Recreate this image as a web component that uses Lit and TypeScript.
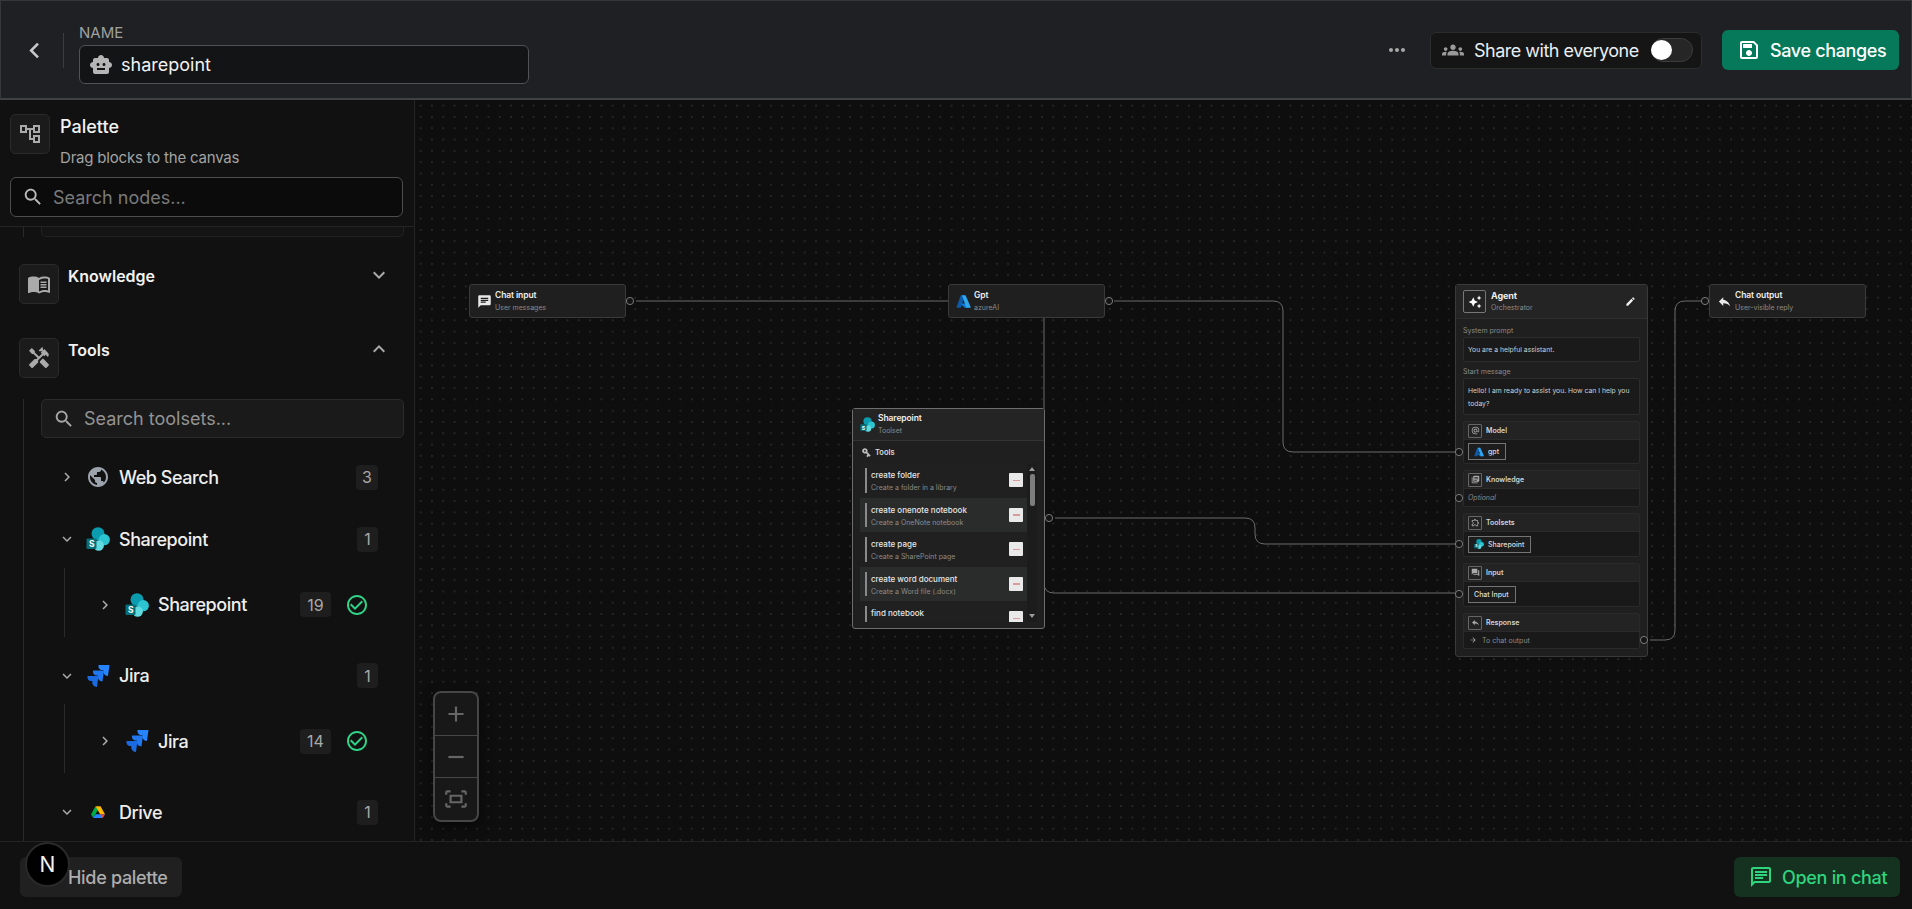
import { LitElement, css, html, svg } from "lit";
import { customElement } from "lit/decorators.js";

const P = {
  back: "M15.41 7.41 14 6l-6 6 6 6 1.41-1.41L10.83 12z",
  down: "M16.59 8.59 12 13.17 7.41 8.59 6 10l6 6 6-6z",
  up: "M12 8l-6 6 1.41 1.41L12 10.83l4.59 4.58L18 14z",
  right: "M10 6 8.59 7.41 13.17 12l-4.58 4.59L10 18l6-6z",
  search:
    "M15.5 14h-.79l-.28-.27C15.41 12.59 16 11.11 16 9.5 16 5.91 13.09 3 9.5 3S3 5.91 3 9.5 5.91 16 9.5 16c1.61 0 3.09-.59 4.23-1.57l.27.28v.79l5 4.99L20.49 19l-4.99-5zm-6 0C7.01 14 5 11.99 5 9.5S7.01 5 9.5 5 14 7.01 14 9.5 11.99 14 9.5 14z",
  robot:
    "M20 9V7c0-1.1-.9-2-2-2h-3c0-1.66-1.34-3-3-3S9 3.34 9 5H6c-1.1 0-2 .9-2 2v2c-1.66 0-3 1.34-3 3s1.34 3 3 3v4c0 1.1.9 2 2 2h12c1.1 0 2-.9 2-2v-4c1.66 0 3-1.34 3-3s-1.34-3-3-3zM7.5 11.5c0-.83.67-1.5 1.5-1.5s1.5.67 1.5 1.5S9.83 13 9 13s-1.5-.67-1.5-1.5zM16 17H8v-2h8v2zm-1-4c-.83 0-1.5-.67-1.5-1.5S14.17 10 15 10s1.5.67 1.5 1.5S15.83 13 15 13z",
  more: "M6 10c-1.1 0-2 .9-2 2s.9 2 2 2 2-.9 2-2-.9-2-2-2zm12 0c-1.1 0-2 .9-2 2s.9 2 2 2 2-.9 2-2-.9-2-2-2zm-6 0c-1.1 0-2 .9-2 2s.9 2 2 2 2-.9 2-2-.9-2-2-2z",
  groups:
    "M12 12.75c1.63 0 3.07.39 4.24.9 1.08.48 1.76 1.56 1.76 2.73V18H6v-1.61c0-1.18.68-2.26 1.76-2.73 1.17-.52 2.61-.91 4.24-.91zM4 13c1.1 0 2-.9 2-2s-.9-2-2-2-2 .9-2 2 .9 2 2 2zm1.13 1.1c-.37-.06-.74-.1-1.13-.1-.99 0-1.93.21-2.78.58C.48 14.9 0 15.62 0 16.43V18h4.5v-1.61c0-.83.23-1.61.63-2.29zM20 13c1.1 0 2-.9 2-2s-.9-2-2-2-2 .9-2 2 .9 2 2 2zm4 3.43c0-.81-.48-1.53-1.22-1.85-.85-.37-1.79-.58-2.78-.58-.39 0-.76.04-1.13.1.4.68.63 1.46.63 2.29V18H24v-1.57zM12 6c1.66 0 3 1.34 3 3s-1.34 3-3 3-3-1.34-3-3 1.34-3 3-3z",
  save: "M17 3H5c-1.11 0-2 .9-2 2v14c0 1.1.89 2 2 2h14c1.1 0 2-.9 2-2V7l-4-4zm2 16H5V5h11.17L19 7.83V19zm-7-7c-1.66 0-3 1.34-3 3s1.34 3 3 3 3-1.34 3-3-1.34-3-3-3zM6 6h9v4H6z",
  tree: "M22 11V3h-7v3H9V3H2v8h7V8h2v10h4v3h7v-8h-7v3h-2V8h2v3h7zM7 9H4V5h3v4zm10 6h3v4h-3v-4zm0-10h3v4h-3V5z",
  book: "M21 5c-1.11-.35-2.33-.5-3.5-.5-1.95 0-4.05.4-5.5 1.5-1.45-1.1-3.55-1.5-5.5-1.5S2.45 4.9 1 6v14.65c0 .25.25.5.5.5.1 0 .15-.05.25-.05C3.1 20.45 5.05 20 6.5 20c1.95 0 4.05.4 5.5 1.5 1.35-.85 3.8-1.5 5.5-1.5 1.65 0 3.35.3 4.75 1.05.1.05.15.05.25.05.25 0 .5-.25.5-.5V6c-.6-.45-1.25-.75-2-1zm0 13.5c-1.1-.35-2.3-.5-3.5-.5-1.7 0-4.15.65-5.5 1.5V8c1.35-.85 3.8-1.5 5.5-1.5 1.2 0 2.4.15 3.5.5v11.5zM13.5 9.5h6V11h-6zM13.5 12h6v1.5h-6zM13.5 14.5h6V16h-6z",
  tools:
    "M21.67 18.17l-5.3-5.3h-.99l-2.54 2.54v.99l5.3 5.3c.39.39 1.02.39 1.41 0l2.12-2.12c.39-.38.39-1.02 0-1.41zM17.34 10.19l1.41-1.41 2.12 2.12c1.17-1.17 1.17-3.07 0-4.24l-3.54-3.54-1.41 1.41V1.71l-.7-.71-3.54 3.54.71.71h2.83l-1.41 1.41 1.06 1.06-2.89 2.89-4.13-4.13V5.06L4.83 2.04 2 4.87 5.03 7.9h1.41l4.13 4.13-.85.85H7.6l-5.3 5.3c-.39.39-.39 1.02 0 1.41l2.12 2.12c.39.39 1.02.39 1.41 0l5.3-5.3v-2.12l5.15-5.15 1.06 1.05z",
  globe:
    "M12 2C6.48 2 2 6.48 2 12s4.48 10 10 10 10-4.48 10-10S17.52 2 12 2zm-1 17.93c-3.95-.49-7-3.85-7-7.93 0-.62.08-1.21.21-1.79L9 15v1c0 1.1.9 2 2 2v1.93zm6.9-2.54c-.26-.81-1-1.39-1.9-1.39h-1v-3c0-.55-.45-1-1-1H8v-2h2c.55 0 1-.45 1-1V7h2c1.1 0 2-.9 2-2v-.41c2.93 1.19 5 4.06 5 7.41 0 2.08-.8 3.97-2.1 5.39z",
  check:
    "M16.59 7.58 10 14.17l-3.59-3.58L5 12l5 5 8-8zM12 2C6.48 2 2 6.48 2 12s4.48 10 10 10 10-4.48 10-10S17.52 2 12 2zm0 18c-4.42 0-8-3.58-8-8s3.58-8 8-8 8 3.58 8 8-3.58 8-8 8z",
  plus: "M19 13h-6v6h-2v-6H5v-2h6V5h2v6h6v2z",
  minus: "M19 13H5v-2h14v2z",
  fit: "M17 4h3c1.1 0 2 .9 2 2v2h-2V6h-3V4zM4 8V6h3V4H4c-1.1 0-2 .9-2 2v2h2zm16 8v2h-3v2h3c1.1 0 2-.9 2-2v-2h-2zM7 18H4v-2H2v2c0 1.1.9 2 2 2h3v-2zM18 8H6v8h12V8zm-2 6H8v-4h8v4z",
  chat: "M20 2H4c-1.1 0-2 .9-2 2v18l4-4h14c1.1 0 2-.9 2-2V4c0-1.1-.9-2-2-2zm0 14H5.17L4 17.17V4h16v12zM6 12h8v2H6zm0-3h12v2H6zm0-3h12v2H6z",
  chatFill:
    "M20 2H4c-1.1 0-1.99.9-1.99 2L2 22l4-4h14c1.1 0 2-.9 2-2V4c0-1.1-.9-2-2-2zM6 9h12v2H6V9zm8 5H6v-2h8v2zm4-6H6V6h12v2z",
  reply: "M10 9V5l-7 7 7 7v-4.1c5 0 8.5 1.6 11 5.1-1-5-4-10-11-11z",
  edit: "M3 17.25V21h3.75L17.81 9.94l-3.75-3.75L3 17.25zM20.71 7.04c.39-.39.39-1.02 0-1.41l-2.34-2.34c-.39-.39-1.02-.39-1.41 0l-1.83 1.83 3.75 3.75 1.83-1.83z",
  spark:
    "M19 9l1.25-2.75L23 5l-2.75-1.25L19 1l-1.25 2.75L15 5l2.75 1.25zm-7.5.5L9 4 6.5 9.5 1 12l5.5 2.5L9 20l2.5-5.5L17 12zM19 15l-1.25 2.75L15 19l2.75 1.25L19 23l1.25-2.75L23 19l-2.75-1.25z",
  key: "M12.65 10C11.83 7.67 9.61 6 7 6c-3.31 0-6 2.69-6 6s2.69 6 6 6c2.61 0 4.83-1.67 5.65-4H17v4h4v-4h2v-4H12.65zM7 14c-1.1 0-2-.9-2-2s.9-2 2-2 2 .9 2 2-.9 2-2 2z",
  arrow: "M12 4l-1.41 1.41L16.17 11H4v2h12.17l-5.58 5.59L12 20l8-8z",
  library:
    "M4 6H2v14c0 1.1.9 2 2 2h14v-2H4V6zm16-4H8c-1.1 0-2 .9-2 2v12c0 1.1.9 2 2 2h12c1.1 0 2-.9 2-2V4c0-1.1-.9-2-2-2zm-1 9H9V9h10v2zm-4 4H9v-2h6v2zm4-8H9V5h10v2z",
  forum:
    "M21 6h-2v9H6v2c0 .55.45 1 1 1h11l4 4V7c0-.55-.45-1-1-1zm-4 6V3c0-.55-.45-1-1-1H3c-.55 0-1 .45-1 1v14l4-4h10c.55 0 1-.45 1-1z",
  puzzle:
    "M10.5 4.5c.28 0 .5.22.5.5v2h6v6h2c.28 0 .5.22.5.5s-.22.5-.5.5h-2v6h-2.12c-.68-1.75-2.39-3-4.38-3s-3.7 1.25-4.38 3H4v-2.12c1.75-.68 3-2.39 3-4.38 0-1.99-1.24-3.7-2.99-4.38L4 7h6V5c0-.28.22-.5.5-.5m0-2C9.12 2.5 8 3.62 8 5H4c-1.1 0-1.99.9-1.99 2v3.8h.29c1.49 0 2.7 1.21 2.7 2.7s-1.21 2.7-2.7 2.7H2V20c0 1.1.9 2 2 2h3.8v-.3c0-1.49 1.21-2.7 2.7-2.7s2.7 1.21 2.7 2.7v.3H17c1.1 0 2-.9 2-2v-4c1.38 0 2.5-1.12 2.5-2.5S20.38 11 19 11V7c0-1.1-.9-2-2-2h-4c0-1.38-1.12-2.5-2.5-2.5z",
  memory:
    "M12 2a10 10 0 1 0 0 20h5v-2h-5a8 8 0 1 1 8-8v1.4c0 .8-.7 1.6-1.5 1.6s-1.5-.8-1.5-1.6V12a5 5 0 1 0-1.5 3.5 3.7 3.7 0 0 0 6.5-2.1V12A10 10 0 0 0 12 2zm0 13a3 3 0 1 1 0-6 3 3 0 0 1 0 6z",
};

const icon = (d: string, cls: string) =>
  html`<svg class=${cls} viewBox="0 0 24 24"><path d=${d}></path></svg>`;

const sharepointLogo = (cls: string) => html`<svg class=${cls} viewBox="0 0 24 24">
  <circle cx="12" cy="6.7" r="6.5" fill="#0c9cb0"></circle>
  <circle cx="18.3" cy="12.7" r="5.6" fill="#2cc4d0"></circle>
  <circle cx="12.7" cy="18.5" r="5.2" fill="#62dbe0"></circle>
  <rect x="0.5" y="11.5" width="10" height="10.5" rx="1" fill="#05707a"></rect>
  <text x="5.5" y="20" font-size="8.5" font-weight="700" fill="#fff" text-anchor="middle">S</text>
</svg>`;

const jiraPiece = "M0 0h11v11c-3 0-5.4-2.4-5.4-5.4V5H4.6C2 5 0 3 0 0z";
const jiraLogo = (cls: string) => html`<svg class=${cls} viewBox="0 0 24 24">
  <path d=${jiraPiece} transform="translate(12.5 1) skewX(-8)" fill="#2684ff"></path>
  <path d=${jiraPiece} transform="translate(7 6.5) skewX(-8)" fill="#1f78f0"></path>
  <path d=${jiraPiece} transform="translate(1.5 12) skewX(-8)" fill="#1a6be0"></path>
</svg>`;

const azureLogo = (cls: string) => html`<svg class=${cls} viewBox="0 0 24 24">
  <path d="M8.3 2h6.4L8 21.3c-.1.4-.5.7-1 .7H2c-.7 0-1.2-.7-1-1.4L7.3 2.7c.1-.4.5-.7 1-.7z" fill="#0c5aa8"></path>
  <path d="M17.8 15.3H7.6c-.3 0-.4.3-.2.5l6.5 6c.2.1.4.2.7.2h5.8z" fill="#0a78d6"></path>
  <path d="M15.6 2.7c-.1-.4-.5-.7-1-.7H8.8c.5 0 .9.3 1 .7l6.3 18.6c.2.4-.1.7-.6.7h7c.7 0 1.2-.7 1-1.4z" fill="#2ea5ec"></path>
</svg>`;

const driveLogo = (cls: string) => html`<svg class=${cls} viewBox="-7 -7 38 38">
  <path d="M8 3 1 15.5l3.5 6L12 8.5z" fill="#00ac47"></path>
  <path d="M8 3h8l7 12.5h-7.6z" fill="#ffba00"></path>
  <path d="M4.5 21.5l3.6-6H23l-3.5 6z" fill="#2684fc"></path>
  <path d="M23 15.5h-7.6l4 6z" fill="#ea4335"></path>
</svg>`;

const baseCss = css`
  * {
    box-sizing: border-box;
  }
  svg {
    display: block;
    flex: none;
    fill: currentColor;
  }
  input {
    flex: 1;
    min-width: 0;
    border: none;
    outline: none;
    background: transparent;
    font: inherit;
    color: inherit;
    padding: 0;
  }
`;

type TreeItem = { name: string; logo: (c: string) => unknown; count: string; tools?: string };

const TOOLSETS: TreeItem[] = [
  { name: "Sharepoint", logo: sharepointLogo, count: "1", tools: "19" },
  { name: "Jira", logo: jiraLogo, count: "1", tools: "14" },
  { name: "Drive", logo: driveLogo, count: "1" },
];

@customElement("palette-panel")
export class PalettePanel extends LitElement {
  static styles = [
    baseCss,
    css`
      :host {
        display: flex;
        flex-direction: column;
        width: 415px;
        flex: none;
        border-right: 1px solid #242424;
        overflow: hidden;
        color: #eee;
      }
      .head {
        flex: none;
        height: 127px;
        padding: 14px 10px 0;
        border-bottom: 1px solid #242424;
      }
      .head-row {
        display: flex;
        gap: 10px;
      }
      .box {
        width: 40px;
        height: 40px;
        flex: none;
        display: flex;
        align-items: center;
        justify-content: center;
        background: #1b1b1b;
        border: 1px solid #2a2a2a;
        border-radius: 5px;
        color: #aaa;
      }
      .box svg {
        width: 24px;
        height: 24px;
      }
      .title {
        font-size: 18px;
        line-height: 22px;
        font-weight: 500;
        color: #f2f2f2;
        margin-top: 1.5px;
      }
      .sub {
        margin-top: 10px;
        font-size: 15px;
        line-height: 20px;
        color: #a3a3a3;
        letter-spacing: -0.2px;
      }
      .search {
        display: flex;
        align-items: center;
        gap: 9px;
        height: 40px;
        margin-top: 9.5px;
        margin-right: 1px;
        padding-left: 11px;
        background: #0b0b0b;
        border: 1px solid #4d4d4d;
        border-radius: 6px;
        font-size: 18px;
        letter-spacing: -0.65px;
      }
      .search svg {
        width: 22px;
        height: 22px;
        color: #bbb;
      }
      input::placeholder {
        color: #7a7a7a;
      }
      .scroll {
        flex: 1;
        min-height: 0;
        overflow: hidden;
        display: flex;
        flex-direction: column;
      }
      .stub {
        flex: none;
        height: 10px;
        margin-left: 23px;
        padding-left: 17px;
        border-left: 1px solid #2a2a2a;
      }
      .stub div {
        width: 363px;
        height: 10px;
        background: #141414;
        border: 1px solid #222;
        border-top: none;
        border-radius: 0 0 5px 5px;
      }
      .section {
        flex: none;
        display: flex;
        align-items: flex-start;
        margin: 27px 23px 0 19px;
        gap: 9px;
      }
      .section + .section {
        margin-top: 34px;
      }
      .section .title {
        flex: 1;
        margin-top: 1px;
        font-size: 16px;
        font-weight: 600;
      }
      .section > svg {
        width: 24px;
        height: 24px;
        color: #aaa;
        margin-top: -1px;
      }
      .tree {
        flex: 1;
        margin: 21px 10px 0 23px;
        padding-left: 17px;
        border-left: 1px solid #2a2a2a;
      }
      .find {
        display: flex;
        align-items: center;
        gap: 9px;
        height: 39px;
        padding-left: 11px;
        background: #1a1a1a;
        border: 1px solid #2b2b2b;
        border-radius: 5px;
        font-size: 18px;
        letter-spacing: -0.65px;
      }
      .find svg {
        width: 22px;
        height: 22px;
        color: #a8a8a8;
      }
      .find input::placeholder {
        color: #939393;
      }
      .rows {
        margin-top: 19px;
      }
      .row {
        display: flex;
        align-items: center;
        height: 40px;
        padding: 0 26px 0 17px;
        font-size: 18px;
        font-weight: 500;
        letter-spacing: -0.45px;
      }
      .chev {
        width: 18px;
        height: 18px;
        color: #aaa;
      }
      .logo {
        width: 24px;
        height: 24px;
        margin: 0 9px 0 10px;
      }
      .globe {
        color: #9ca3ad;
        fill: #9ca3ad;
      }
      .name {
        flex: 1;
      }
      .badge {
        min-width: 21px;
        height: 25px;
        padding: 0 6px;
        display: flex;
        align-items: center;
        justify-content: center;
        background: #1e1e1e;
        border-radius: 4px;
        color: #a8a8a8;
        font-size: 16px;
        font-weight: 400;
        letter-spacing: 0;
      }
      .group {
        margin-bottom: 19px;
      }
      .group.leaf {
        margin-bottom: 22px;
      }
      .child {
        margin: 8.5px 0 0 23px;
        height: 69px;
        padding-top: 17px;
        border-left: 1px solid #2a2a2a;
      }
      .child .row {
        padding: 0 35px 0 31px;
      }
      .child .logo {
        margin: 0 9px 0 11px;
      }
      .child .badge {
        width: 31px;
      }
      .ok {
        width: 24px;
        height: 24px;
        margin-left: 14px;
        color: #2fd488;
      }
    `,
  ];

  render() {
    return html`
      <div class="head">
        <div class="head-row">
          <div class="box">${icon(P.tree, "")}</div>
          <div>
            <div class="title">Palette</div>
            <div class="sub">Drag blocks to the canvas</div>
          </div>
        </div>
        <div class="search">
          ${icon(P.search, "")}
          <input placeholder="Search nodes..." />
        </div>
      </div>
      <div class="scroll">
        <div class="stub"><div></div></div>
        <div class="section">
          <div class="box">${icon(P.book, "")}</div>
          <div class="title">Knowledge</div>
          ${icon(P.down, "")}
        </div>
        <div class="section">
          <div class="box">${icon(P.tools, "")}</div>
          <div class="title">Tools</div>
          ${icon(P.up, "")}
        </div>
        <div class="tree">
          <div class="find">
            ${icon(P.search, "")}
            <input placeholder="Search toolsets..." />
          </div>
          <div class="rows">
            <div class="group leaf">
              <div class="row">
                ${icon(P.right, "chev")} ${icon(P.globe, "logo globe")}
                <span class="name">Web Search</span>
                <span class="badge">3</span>
              </div>
            </div>
            ${TOOLSETS.map(
              (t) => html`
                <div class="group">
                  <div class="row">
                    ${icon(P.down, "chev")} ${t.logo("logo")}
                    <span class="name">${t.name}</span>
                    <span class="badge">${t.count}</span>
                  </div>
                  ${t.tools
                    ? html`<div class="child">
                        <div class="row">
                          ${icon(P.right, "chev")} ${t.logo("logo")}
                          <span class="name">${t.name}</span>
                          <span class="badge">${t.tools}</span>
                          ${icon(P.check, "ok")}
                        </div>
                      </div>`
                    : ""}
                </div>
              `
            )}
          </div>
        </div>
      </div>
    `;
  }
}

type FlatNode = { x: number; title: string; sub: string; logo: unknown };

const FLAT_NODES: FlatNode[] = [
  { x: 54, title: "Chat input", sub: "User messages", logo: icon(P.chatFill, "n-ic") },
  { x: 533, title: "Gpt", sub: "azureAI", logo: azureLogo("n-ic") },
  { x: 1294, title: "Chat output", sub: "User-visible reply", logo: icon(P.reply, "n-ic") },
];

const SP_TOOLS = [
  ["create folder", "Create a folder in a library"],
  ["create onenote notebook", "Create a OneNote notebook"],
  ["create page", "Create a SharePoint page"],
  ["create word document", "Create a Word file (.docx)"],
  ["find notebook", ""],
];

const EDGES = [
  "M636 301H948",
  "M1114 301H1273Q1283 301 1283 311V442Q1283 452 1293 452H1455",
  "M1044 318V583Q1044 593 1054 593H1455",
  "M1055 518H1245Q1255 518 1255 528V534Q1255 544 1265 544H1455",
  "M1650 640H1665Q1675 640 1675 630V311Q1675 301 1685 301H1701",
];

const HANDLES: [number, number][] = [
  [630, 301],
  [1109, 301],
  [1049, 518],
  [1459, 452],
  [1459, 498],
  [1459, 544],
  [1459, 594],
  [1644, 640],
  [1705, 301],
];

@customElement("flow-canvas")
export class FlowCanvas extends LitElement {
  static styles = [
    baseCss,
    css`
      :host {
        display: block;
        flex: 1;
        position: relative;
        overflow: hidden;
        background-color: #0e0e0e;
        background-image: radial-gradient(circle, #262626 0.8px, transparent 1px);
        background-size: 11.3px 11.3px;
        color: #eee;
      }
      .wires {
        position: absolute;
        inset: 0;
        width: 100%;
        height: 100%;
        fill: none;
      }
      .wires path {
        stroke: #6a6a6a;
        stroke-width: 1;
      }
      .wires circle {
        fill: #141414;
        stroke: #7a7a7a;
        stroke-width: 1;
      }
      .node {
        position: absolute;
        background: #1f1f1f;
        border: 1px solid #3a3a3a;
        border-radius: 3px;
      }
      .flat {
        top: 184px;
        width: 157px;
        height: 34px;
        display: flex;
        align-items: center;
        gap: 3px;
        padding-left: 7px;
      }
      .n-ic {
        width: 15px;
        height: 15px;
        color: #e8e8e8;
      }
      .t {
        font-size: 8.5px;
        line-height: 11px;
        font-weight: 600;
        color: #eee;
        letter-spacing: -0.1px;
      }
      .s {
        margin-top: 2px;
        font-size: 7px;
        line-height: 10px;
        color: #8a8a8a;
      }
      .toolset {
        left: 437px;
        top: 308px;
        width: 193px;
        height: 221px;
        border-color: #6e6e6e;
        display: flex;
        flex-direction: column;
      }
      .n-head {
        flex: none;
        height: 32px;
        display: flex;
        align-items: center;
        gap: 3px;
        padding-left: 7px;
        background: #242424;
        border-bottom: 1px solid #333;
      }
      .tools-label {
        flex: none;
        height: 22px;
        display: flex;
        align-items: center;
        gap: 3px;
        padding-left: 8px;
        font-size: 7.5px;
        font-weight: 600;
        color: #ddd;
      }
      .tools-label svg {
        width: 11px;
        height: 11px;
        color: #bbb;
        transform: rotate(45deg);
      }
      .tool-box {
        flex: none;
        margin: 0 7px;
        height: 159px;
        display: flex;
        background: #202020;
        border-radius: 2px;
        overflow: hidden;
      }
      .tool-list {
        flex: 1;
        min-width: 0;
        overflow: hidden;
      }
      .tool {
        height: 34.5px;
        display: flex;
        align-items: center;
        padding: 5px 4px 5px 5px;
        gap: 4px;
      }
      .tool:nth-child(even) {
        background: #2a2c2b;
      }
      .tool .bar {
        width: 2px;
        align-self: stretch;
        flex: none;
        background: #8a8a8a;
      }
      .tool .txt {
        flex: 1;
        min-width: 0;
        margin-top: 3px;
      }
      .tool .nm {
        font-size: 8px;
        line-height: 11px;
        font-weight: 500;
        color: #e6e6e6;
      }
      .tool .ds {
        height: 10px;
        margin-top: 2px;
        font-size: 7px;
        line-height: 10px;
        color: #8a8a8a;
      }
      .rm {
        width: 14px;
        height: 14px;
        flex: none;
        display: flex;
        align-items: center;
        justify-content: center;
        background: #e9e9e9;
        border-radius: 1px;
      }
      .rm i {
        display: block;
        width: 7px;
        height: 1.5px;
        background: #d89a9a;
      }
      .track {
        width: 10px;
        flex: none;
        display: flex;
        flex-direction: column;
        align-items: center;
        background: #1c1c1c;
        padding: 4px 0;
      }
      .arr-up,
      .arr-down {
        width: 0;
        height: 0;
        border-left: 3px solid transparent;
        border-right: 3px solid transparent;
      }
      .arr-up {
        border-bottom: 4px solid #999;
      }
      .arr-down {
        margin-top: auto;
        border-top: 4px solid #999;
      }
      .thumb {
        width: 5px;
        height: 32px;
        margin-top: 3px;
        background: #7d7d7d;
        border-radius: 2px;
      }
      .agent {
        left: 1040px;
        top: 184px;
        width: 193px;
        height: 373px;
      }
      .a-head {
        height: 34px;
        display: flex;
        align-items: center;
        gap: 5px;
        padding: 0 11px 0 7px;
        background: #242424;
        border-bottom: 1px solid #2e2e2e;
      }
      .a-ic {
        width: 23px;
        height: 23px;
        display: flex;
        align-items: center;
        justify-content: center;
        border: 1px solid #777;
        border-radius: 2px;
        background: #222;
      }
      .a-ic svg {
        width: 14px;
        height: 14px;
        color: #fff;
      }
      .a-head .t {
        font-size: 9px;
        font-weight: 700;
      }
      .a-title {
        flex: 1;
      }
      .pencil {
        width: 11px;
        height: 11px;
        color: #eee;
      }
      .a-body {
        padding: 5px 7px 0;
      }
      .lbl {
        height: 13px;
        font-size: 7px;
        line-height: 13px;
        color: #8a8a8a;
      }
      .prompt {
        height: 25px;
        padding: 0 4px;
        margin-bottom: 3px;
        display: flex;
        align-items: center;
        background: #1a1a1a;
        border: 1px solid #2c2c2c;
        border-radius: 2px;
        font-size: 6.8px;
        line-height: 13px;
        color: #cfcfcf;
      }
      .prompt.tall {
        height: 37px;
        margin: 0 0 6px;
      }
      .card {
        margin-bottom: 6px;
        display: flex;
        flex-direction: column;
        height: 44px;
        background: #191919;
        border: 1px solid #2a2a2a;
        border-radius: 2px;
      }
      .card.h43 {
        height: 43px;
      }
      .card.h37 {
        height: 37px;
      }
      .card.h36 {
        height: 36px;
      }
      .c-head {
        flex: none;
        height: 18px;
        display: flex;
        align-items: center;
        gap: 4px;
        padding-left: 4px;
        background: #232323;
        border-bottom: 1px solid #2a2a2a;
        font-size: 7px;
        font-weight: 600;
        color: #cfd6da;
      }
      .c-ic {
        width: 14px;
        height: 14px;
        display: flex;
        align-items: center;
        justify-content: center;
        border: 1px solid #666;
        border-radius: 1px;
      }
      .c-ic svg {
        width: 9px;
        height: 9px;
        color: #aaa;
      }
      .c-body {
        flex: 1;
        display: flex;
        align-items: center;
        padding-left: 4px;
        font-size: 7px;
        color: #8a8a8a;
      }
      .chip {
        height: 17px;
        display: flex;
        align-items: center;
        gap: 4px;
        padding: 0 6px 0 5px;
        background: #1d1d1d;
        border: 1.5px solid #747474;
        color: #ddd;
        font-size: 7px;
        font-weight: 500;
      }
      .chip svg {
        width: 10px;
        height: 10px;
      }
      .opt {
        font-style: italic;
      }
      .to {
        display: flex;
        align-items: center;
      }
      .to svg {
        width: 8px;
        height: 8px;
        margin: 0 5px 0 1px;
        color: #aaa;
      }
      .zoom {
        position: absolute;
        left: 18px;
        bottom: 19px;
        width: 46px;
        height: 131px;
        display: flex;
        flex-direction: column;
        background: #181818;
        border: 2px solid #464646;
        border-radius: 8px;
        color: #666;
        box-shadow: 0 4px 12px rgba(0, 0, 0, 0.5);
      }
      .zoom div {
        flex: 1;
        display: flex;
        align-items: center;
        justify-content: center;
      }
      .zoom div + div {
        border-top: 1px solid #464646;
      }
      .zoom svg {
        width: 26px;
        height: 26px;
      }
    `,
  ];

  private renderCard(cls: string, ic: string, title: string, body: unknown) {
    return html`<div class="card ${cls}">
      <div class="c-head"><span class="c-ic">${icon(ic, "")}</span>${title}</div>
      <div class="c-body">${body}</div>
    </div>`;
  }

  render() {
    return html`
      <svg class="wires" viewBox="415 100 1497 741">
        ${EDGES.map((d) => svg`<path d=${d}></path>`)}
      </svg>
      ${FLAT_NODES.map(
        (n) => html`<div class="node flat" style="left:${n.x}px">
          ${n.logo}
          <div>
            <div class="t">${n.title}</div>
            <div class="s">${n.sub}</div>
          </div>
        </div>`
      )}
      <div class="node toolset">
        <div class="n-head">
          ${sharepointLogo("n-ic")}
          <div>
            <div class="t">Sharepoint</div>
            <div class="s">Toolset</div>
          </div>
        </div>
        <div class="tools-label">${icon(P.key, "")}Tools</div>
        <div class="tool-box">
          <div class="tool-list">
            ${SP_TOOLS.map(
              ([nm, ds]) => html`<div class="tool">
                <span class="bar"></span>
                <div class="txt">
                  <div class="nm">${nm}</div>
                  <div class="ds">${ds}</div>
                </div>
                <span class="rm"><i></i></span>
              </div>`
            )}
          </div>
          <div class="track">
            <span class="arr-up"></span>
            <span class="thumb"></span>
            <span class="arr-down"></span>
          </div>
        </div>
      </div>
      <div class="node agent">
        <div class="a-head">
          <span class="a-ic">${icon(P.spark, "")}</span>
          <div class="a-title">
            <div class="t">Agent</div>
            <div class="s">Orchestrator</div>
          </div>
          ${icon(P.edit, "pencil")}
        </div>
        <div class="a-body">
          <div class="lbl">System prompt</div>
          <div class="prompt">You are a helpful assistant.</div>
          <div class="lbl">Start message</div>
          <div class="prompt tall">Hello! I am ready to assist you. How can I help you today?</div>
          ${this.renderCard("h43", P.memory, "Model", html`<span class="chip">${azureLogo("")}gpt</span>`)}
          ${this.renderCard("h37", P.library, "Knowledge", html`<span class="opt">Optional</span>`)}
          ${this.renderCard("", P.puzzle, "Toolsets", html`<span class="chip">${sharepointLogo("")}Sharepoint</span>`)}
          ${this.renderCard("", P.forum, "Input", html`<span class="chip">Chat Input</span>`)}
          ${this.renderCard("h36", P.reply, "Response", html`<span class="to">${icon(P.arrow, "")}To chat output</span>`)}
        </div>
      </div>
      <svg class="wires" viewBox="415 100 1497 741">
        ${HANDLES.map(([x, y]) => svg`<circle cx=${x} cy=${y} r="3.6"></circle>`)}
      </svg>
      <div class="zoom">
        <div>${icon(P.plus, "")}</div>
        <div>${icon(P.minus, "")}</div>
        <div>${icon(P.fit, "")}</div>
      </div>
    `;
  }
}

@customElement("app-root")
export class AppRoot extends LitElement {
  static styles = [
    baseCss,
    css`
      :host {
        display: flex;
        flex-direction: column;
        position: relative;
        width: 1912px;
        height: 909px;
        overflow: hidden;
        background: #101110;
        font-family: Inter, "Liberation Sans", sans-serif;
        color: #eee;
      }
      .top {
        flex: none;
        height: 100px;
        display: flex;
        align-items: center;
        padding: 1px 12px 0 18px;
        background: #1e2023;
        border: 1px solid #35373a;
        border-bottom: 2px solid #3f4143;
      }
      .back {
        width: 31px;
        height: 31px;
        color: #c8c8c8;
      }
      .rule {
        width: 1px;
        height: 35px;
        margin: 0 15px 0 13px;
        background: #3a3c3f;
      }
      .name-block {
        width: 450px;
        padding-top: 7px;
      }
      .name-label {
        font-size: 15px;
        line-height: 20px;
        color: #a0a0a0;
      }
      .name-input {
        display: flex;
        align-items: center;
        gap: 8px;
        height: 39px;
        margin-top: 2px;
        padding-left: 9px;
        background: #131416;
        border: 1px solid #505255;
        border-radius: 6px;
        font-size: 18px;
        letter-spacing: -0.5px;
        color: #f2f2f2;
      }
      .name-input svg {
        width: 24px;
        height: 24px;
        color: #b5b5b5;
      }
      .spacer {
        flex: 1;
      }
      .more {
        width: 24px;
        height: 24px;
        color: #a8a8a8;
        margin-right: 21px;
      }
      .share {
        width: 272px;
        height: 37px;
        display: flex;
        align-items: center;
        padding-left: 11px;
        background: #151515;
        border: 1px solid #2c2c2c;
        border-radius: 6px;
        font-size: 18px;
        letter-spacing: -0.5px;
        color: #e8eef2;
      }
      .share svg {
        width: 22px;
        height: 22px;
        color: #9a9a9a;
        margin-right: 10px;
      }
      .toggle {
        width: 42px;
        height: 24px;
        margin-left: 12px;
        padding: 1px;
        background: #262626;
        border: 1px solid #3c3c3c;
        border-radius: 12px;
      }
      .toggle i {
        display: block;
        width: 21px;
        height: 20px;
        border-radius: 50%;
        background: #fff;
        margin-left: -2px;
      }
      .save {
        width: 177px;
        height: 40px;
        margin-left: 20px;
        display: flex;
        align-items: center;
        gap: 9px;
        padding-left: 15px;
        background: #05795a;
        border-radius: 6px;
        font-size: 18px;
        font-weight: 500;
        letter-spacing: -0.35px;
        color: #fff;
      }
      .save svg {
        width: 24px;
        height: 24px;
      }
      .middle {
        flex: 1;
        min-height: 0;
        display: flex;
      }
      .bottom {
        flex: none;
        height: 68px;
        display: flex;
        justify-content: space-between;
        padding: 15px 12px 0 20px;
        border-top: 1px solid #242424;
      }
      .btn {
        height: 40px;
        display: flex;
        align-items: center;
        border-radius: 6px;
        font-size: 18px;
        font-weight: 500;
        letter-spacing: -0.3px;
      }
      .hide {
        width: 162px;
        padding-left: 48px;
        background: #202020;
        color: #aeaeae;
      }
      .open {
        width: 166px;
        gap: 9px;
        padding-left: 15px;
        background: #15311f;
        color: #2fd47f;
      }
      .open svg {
        width: 24px;
        height: 24px;
      }
      .next {
        position: absolute;
        left: 25px;
        top: 842px;
        width: 45px;
        height: 45px;
        display: flex;
        align-items: center;
        justify-content: center;
        background: #000;
        border: 2px solid #2a2a2a;
        border-radius: 50%;
        font-size: 21px;
        font-weight: 400;
        color: #f2f2f2;
      }
    `,
  ];

  render() {
    return html`
      <div class="top">
        ${icon(P.back, "back")}
        <span class="rule"></span>
        <div class="name-block">
          <div class="name-label">NAME</div>
          <div class="name-input">${icon(P.robot, "")}<input value="sharepoint" /></div>
        </div>
        <span class="spacer"></span>
        ${icon(P.more, "more")}
        <div class="share">
          ${icon(P.groups, "")}
          <span>Share with everyone</span>
          <span class="toggle"><i></i></span>
        </div>
        <div class="save">${icon(P.save, "")}Save changes</div>
      </div>
      <div class="middle">
        <palette-panel></palette-panel>
        <flow-canvas></flow-canvas>
      </div>
      <div class="bottom">
        <div class="btn hide">Hide palette</div>
        <div class="btn open">${icon(P.chat, "")}Open in chat</div>
      </div>
      <div class="next">N</div>
    `;
  }
}
